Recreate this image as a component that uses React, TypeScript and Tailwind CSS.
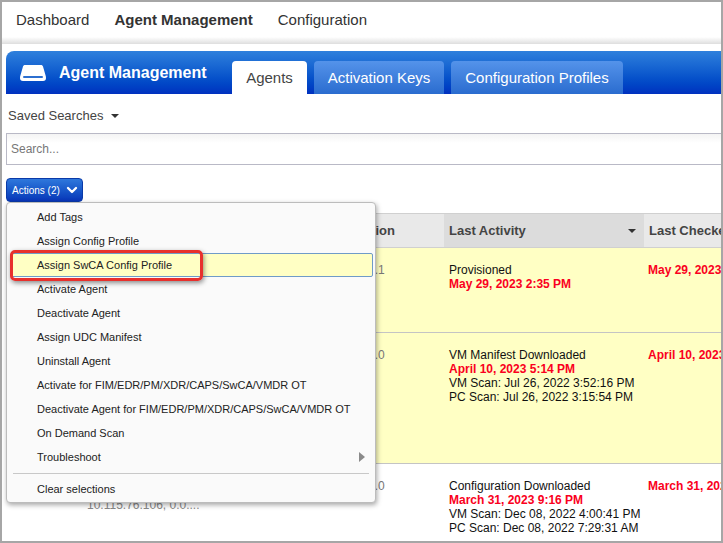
import { ChevronDown } from 'lucide-react';

const menuItems = [
  'Add Tags',
  'Assign Config Profile',
  'Assign SwCA Config Profile',
  'Activate Agent',
  'Deactivate Agent',
  'Assign UDC Manifest',
  'Uninstall Agent',
  'Activate for FIM/EDR/PM/XDR/CAPS/SwCA/VMDR OT',
  'Deactivate Agent for FIM/EDR/PM/XDR/CAPS/SwCA/VMDR OT',
  'On Demand Scan',
];

function ActionsMenu() {
  return (
    <div className="absolute left-0 top-full z-10 w-[370px] rounded-[4px] border border-[#bcbcbc] bg-[#fafafa] pt-[2px] pb-[1px] text-[11px] text-[#222] shadow-[1px_2px_5px_rgba(0,0,0,0.35)]">
      {menuItems.map((item) =>
        item === 'Assign SwCA Config Profile' ? (
          <div
            key={item}
            className="relative ml-[3px] mr-[2px] flex h-[24px] items-center rounded-[2px] border border-[#6f9bc8] bg-[#ffffc4] pl-[26px]"
          >
            {item}
            <div className="absolute left-[-1px] top-[-4px] h-[31px] w-[193px] rounded-[5px] border-[3px] border-[#e8302c] shadow-[1px_2px_5px_rgba(0,0,0,0.45)]" />
          </div>
        ) : (
          <div key={item} className="flex h-[24px] items-center pl-[30px]">
            {item}
          </div>
        ),
      )}
      <div className="flex h-[24px] items-center justify-between pl-[30px] pr-[10px]">
        Troubleshoot
        <svg width="6" height="10" viewBox="0 0 6 10">
          <path d="M0 0L6 5L0 10Z" fill="#8a8a8a" />
        </svg>
      </div>
      <div className="mx-[6px] mt-[4px] mb-[3px] h-px bg-[#c8c8c8]" />
      <div className="flex h-[24px] items-center pl-[30px]">Clear selections</div>
    </div>
  );
}

function Caret({ className }: { className?: string }) {
  return (
    <svg width="8" height="4" viewBox="0 0 8 4" className={className}>
      <path d="M0 0H8L4 4Z" fill="#333" />
    </svg>
  );
}

const rows = [
  {
    bg: 'bg-[#ffffc4]',
    height: 'h-[85px]',
    version: '6.1.0.1',
    status: 'Provisioned',
    date: 'May 29, 2023 2:35 PM',
    scans: [],
    checked: 'May 29, 2023',
  },
  {
    bg: 'bg-[#ffffc4]',
    height: 'h-[131px]',
    version: '6.1.0.0',
    status: 'VM Manifest Downloaded',
    date: 'April 10, 2023 5:14 PM',
    scans: ['VM Scan: Jul 26, 2022 3:52:16 PM', 'PC Scan: Jul 26, 2022 3:15:54 PM'],
    checked: 'April 10, 2023',
  },
  {
    bg: 'bg-white',
    height: 'h-[78px]',
    version: '6.1.0.0',
    status: 'Configuration Downloaded',
    date: 'March 31, 2023 9:16 PM',
    scans: ['VM Scan: Dec 08, 2022 4:00:41 PM', 'PC Scan: Dec 08, 2022 7:29:31 AM'],
    checked: 'March 31, 2023',
    address: '10.115.76.106, 0.0....',
  },
];

export default function App() {
  return (
    <div className="h-[543px] w-[723px] overflow-hidden border-2 border-[#a6a6a6] bg-white font-['Liberation_Sans',Arial,sans-serif]">
      {/* Top nav */}
      <div className="flex h-[35px] items-center gap-[25px] pl-[14px] pt-[1px] text-[15px] text-[#333]">
        <span>Dashboard</span>
        <span className="font-bold">Agent Management</span>
        <span>Configuration</span>
      </div>
      <div className="h-[7px] bg-gradient-to-b from-white to-[#dedede]" />

      <div className="pl-[4px] pt-[7px]">
        {/* Blue header */}
        <div className="flex h-[43px] items-end rounded-tl-[8px] bg-gradient-to-b from-[#2f80dc] to-[#0030bf]">
          <div className="flex h-full w-[226px] shrink-0 items-center">
            <svg width="26" height="16" viewBox="0 0 26 16" className="ml-[14px]">
              <path
                d="M5 0H21C22 0 22.6 .5 23 1.5L25.6 10.5C25.9 11.5 26 12 26 13C26 15 25 16 23 16H3C1 16 0 15 0 13C0 12 .1 11.5 .4 10.5L3 1.5C3.4 .5 4 0 5 0Z"
                fill="white"
              />
              <rect x="3" y="11" width="20" height="2" rx="1" fill="#2c6fd0" />
            </svg>
            <span className="ml-[13px] text-[16px] font-bold text-white">Agent Management</span>
          </div>
          <div className="flex h-[33px] w-[75px] items-center justify-center rounded-t-[4px] bg-white pt-[1px] text-[15px] text-[#444]">
            Agents
          </div>
          <div className="ml-[7px] flex h-[33px] w-[130px] items-center justify-center rounded-t-[4px] bg-gradient-to-b from-[#5493ea] to-[#2a6ccf] pt-[1px] text-[15px] text-white">
            Activation Keys
          </div>
          <div className="ml-[7px] flex h-[33px] w-[172px] items-center justify-center rounded-t-[4px] bg-gradient-to-b from-[#5493ea] to-[#2a6ccf] pt-[1px] text-[15px] text-white">
            Configuration Profiles
          </div>
        </div>

        {/* Saved searches */}
        <div className="flex h-[39px] items-center pl-[2px] pt-[4px] text-[13px] text-[#444]">
          Saved Searches
          <Caret className="ml-[8px]" />
        </div>

        {/* Search */}
        <div className="flex h-[32px] items-center border border-r-0 border-[#b9b9c6] bg-gradient-to-b from-[#f4f4f4] to-white to-30% pl-[4px] text-[12px] text-[#777]">
          Search...
        </div>

        {/* Actions */}
        <div className="relative mt-[13px] w-[77px]">
          <div className="flex h-[24px] items-center whitespace-nowrap rounded-[4px] border border-[#0a3aa8] bg-gradient-to-b from-[#2f78dc] to-[#0a35b8] pl-[5px] text-[10px] text-white">
            Actions (2)
            <ChevronDown size={16} strokeWidth={3.5} className="ml-[4px]" />
          </div>
          <ActionsMenu />
        </div>

        {/* Table */}
        <div className="mt-[11px]">
          <div className="grid h-[35px] grid-cols-[79px_260px_99px_200px_1fr] border-y border-[#d0d0d0] bg-[#e9e9e9] text-[13px] font-bold text-[#444]">
            <div />
            <div />
            <div className="flex items-center pl-[3px]">Version</div>
            <div className="flex items-center justify-between bg-[#dcdcdc] pl-[5px] pr-[8px]">
              Last Activity
              <Caret />
            </div>
            <div className="flex items-center whitespace-nowrap pl-[5px]">Last Checked</div>
          </div>
          {rows.map((row) => (
            <div
              key={row.date}
              className={`grid grid-cols-[79px_260px_99px_200px_1fr] overflow-hidden border-b border-[#c4c4c4] text-[12px] leading-[14px] ${row.bg} ${row.height}`}
            >
              <div />
              <div className="pl-[2px] pt-[34px] text-[#888]">{row.address}</div>
              <div className="pl-[3px] pt-[15px] text-[#777]">{row.version}</div>
              <div className="pl-[5px] pt-[15px] text-[#111]">
                <div>{row.status}</div>
                <div className="font-bold text-[#fa0020]">{row.date}</div>
                {row.scans.map((scan) => (
                  <div key={scan}>{scan}</div>
                ))}
              </div>
              <div className="whitespace-nowrap pl-[4px] pt-[15px] font-bold text-[#fa0020]">{row.checked}</div>
            </div>
          ))}
        </div>
      </div>
    </div>
  );
}
